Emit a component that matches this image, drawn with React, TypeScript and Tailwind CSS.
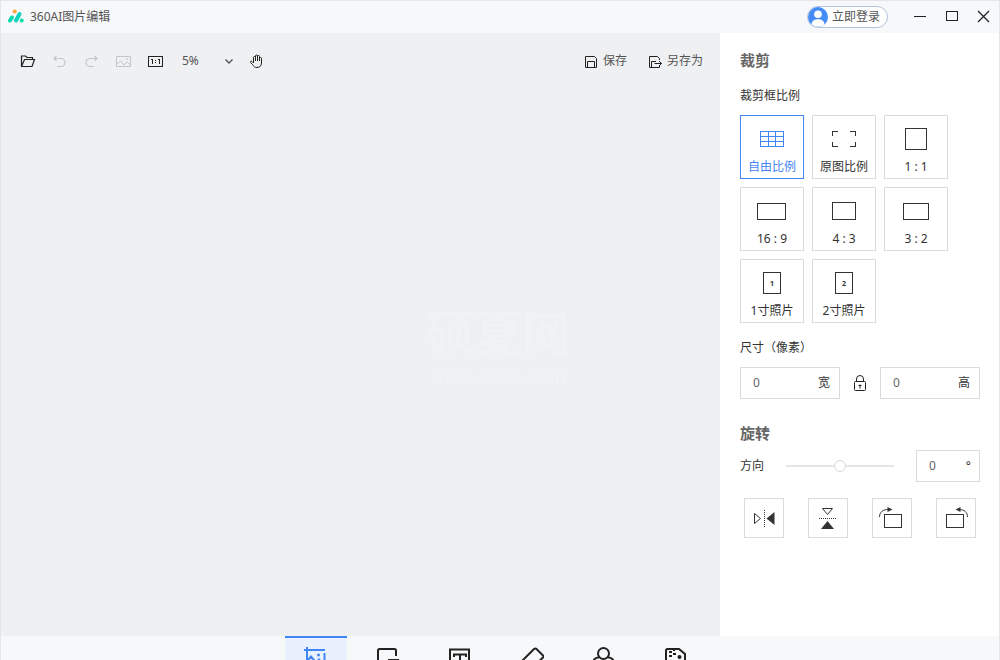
import React, { useState } from "react";

type IconProps = { children: React.ReactNode; w?: number; h?: number; className?: string; crisp?: boolean };

function Icon({ children, w = 16, h = 16, className = "", crisp = false }: IconProps) {
  return (
    <svg
      width={w}
      height={h}
      viewBox={`0 0 ${w} ${h}`}
      fill="none"
      stroke="currentColor"
      shapeRendering={crisp ? "crispEdges" : "auto"}
      className={`shrink-0 ${className}`}
      aria-hidden="true"
    >
      {children}
    </svg>
  );
}

const ratios: { label: string; art: React.ReactNode }[] = [
  {
    label: "自由比例",
    art: <path d="M19.5 15.5h23v15h-23zM19.5 20.5h23M19.5 25.5h23M27.5 15.5v15M34.5 15.5v15" />,
  },
  {
    label: "原图比例",
    art: <path d="M19.5 20V15.5H25M37 15.5h5.5V20M42.5 26v4.5H37M25 30.5h-5.5V26" />,
  },
  { label: "1 : 1", art: <rect x="20.5" y="12.5" width="21" height="21" /> },
  { label: "16 : 9", art: <rect x="16.5" y="15.5" width="28" height="16" /> },
  { label: "4 : 3", art: <rect x="19.5" y="14.5" width="23" height="17" /> },
  { label: "3 : 2", art: <rect x="18.5" y="15.5" width="25" height="16" /> },
  {
    label: "1寸照片",
    art: (
      <>
        <rect x="22.5" y="12.5" width="17" height="21" />
        <text x="31" y="26" textAnchor="middle" fontSize="7" fontWeight="700" fill="currentColor" stroke="none">1</text>
      </>
    ),
  },
  {
    label: "2寸照片",
    art: (
      <>
        <rect x="22.5" y="12.5" width="17" height="21" />
        <text x="31" y="26" textAnchor="middle" fontSize="7" fontWeight="700" fill="currentColor" stroke="none">2</text>
      </>
    ),
  },
];

const tools: { label: string; art: React.ReactNode }[] = [
  {
    label: "裁剪",
    art: (
      <>
        <path d="M3 0v20h21M0 3h21M20.500 6v18M3 14l4-4.500 5 6 3-3 5 6" />
        <circle cx="14.500" cy="8" r="1.500" fill="currentColor" stroke="none" />
      </>
    ),
  },
  {
    label: "尺寸",
    art: <path d="M11 21H2V3.500Q2 2 3.500 2h15Q20 2 20 3.500V9M13 13h9v8h-9z" />,
  },
  {
    label: "文字",
    art: <path d="M2 2.500h19v19H2zM6 10V7.500h12V10M12 7.500V18M9.500 17.500h5" />,
  },
  {
    label: "消除",
    art: <path d="M2 14L14 2Q15.500 1 16.500 2l6.500 6.500Q24 9.500 23 10.500L12 21H8l-6-6" />,
  },
  {
    label: "滤镜",
    art: (
      <>
        <circle cx="11.500" cy="6.500" r="5.500" />
        <path d="M7 10.500a5.500 5.500 0 1 0 5 5.500M16 10.500a5.500 5.500 0 1 1-5 5.500" />
      </>
    ),
  },
  {
    label: "马赛克",
    art: (
      <>
        <path d="M2 22V3.500Q2 2 3.500 2H15l6 5v15z" />
        <path d="M5 4h3v2H5zM9 6h3v2H9zM5 8h3v2H5zM9 2h2v2H9z" fill="currentColor" stroke="none" />
        <circle cx="15.500" cy="10" r="2" fill="currentColor" stroke="none" />
      </>
    ),
  },
];

const transforms: { label: string; art: React.ReactNode }[] = [
  {
    label: "水平翻转",
    art: (
      <>
        <path d="M9.500 14.500l6 5-6 5z" />
        <path d="M19.500 11v17" strokeDasharray="1 1" />
        <path d="M29.500 13v13l-8-6.500z" fill="currentColor" stroke="none" />
      </>
    ),
  },
  {
    label: "垂直翻转",
    art: (
      <>
        <path d="M13.500 9.500h10l-5 6z" />
        <path d="M10 19.500h17" strokeDasharray="1 1" />
        <path d="M12 30h13l-6.500-8z" fill="currentColor" stroke="none" />
      </>
    ),
  },
  {
    label: "向右旋转",
    art: (
      <>
        <rect x="11.500" y="15.500" width="17" height="13" />
        <path d="M6.500 18C6.500 13 10 10.500 15 10.500" />
        <path d="M14.500 8l5 2.500-5 2.500z" fill="currentColor" stroke="none" />
      </>
    ),
  },
  {
    label: "向左旋转",
    art: (
      <>
        <rect x="9.500" y="15.500" width="17" height="13" />
        <path d="M30.500 18C30.500 13 27 10.500 22 10.500" />
        <path d="M23.500 8l-5 2.500 5 2.500z" fill="currentColor" stroke="none" />
      </>
    ),
  },
];

const toolButton = "flex h-6 w-8 items-center justify-center";

function NumberField({ label, unit, className }: { label: string; unit: string; className: string }) {
  return (
    <label className={`flex h-8 items-center border border-[#dadada] bg-white ${className}`}>
      <input aria-label={label} defaultValue="0" className="min-w-0 flex-1 pl-3 text-[#666] outline-none" />
      <span className="text-[#333]">{unit}</span>
    </label>
  );
}

function TitleBar() {
  return (
    <header className="flex h-8 shrink-0 items-center bg-[#f7f8fa] pl-[7px]">
      <Icon className="mr-[6px]">
        <g strokeLinecap="round" strokeWidth="4">
          <path d="M2 11.500L4 8.500" stroke="#08d9b0" />
          <path d="M8 11.500L11.500 5" stroke="#0cd3be" />
          <path d="M13.700 11.600v0" stroke="#08dfa8" />
        </g>
        <circle cx="6.700" cy="2.500" r="2.100" fill="#ffa53a" stroke="none" />
      </Icon>
      <h1 className="flex-1 text-[#555]">360AI图片编辑</h1>
      <button className="mr-[15px] flex h-[22px] items-center gap-1 rounded-full border border-[#b6c3dc] bg-white pr-[7px] text-[#555]">
        <svg width="20" height="20" viewBox="0 0 20 20" aria-hidden="true">
          <circle cx="10" cy="10" r="10" fill="#468cf7" />
          <circle cx="10" cy="7.300" r="3.800" fill="#fff" />
          <path d="M3.500 17.200C4 13.500 7 12.300 10 12.300s6 1.200 6.500 4.900A9.300 9.300 0 0 1 3.500 17.200z" fill="#fff" />
        </svg>
        立即登录
      </button>
      <button aria-label="最小化" className="flex h-8 w-8 items-center justify-center text-[#222]">
        <Icon crisp><path d="M3 7.500h12" /></Icon>
      </button>
      <button aria-label="最大化" className="flex h-8 w-8 items-center justify-center text-[#222]">
        <Icon crisp><rect x="3.500" y="2.500" width="11" height="9" /></Icon>
      </button>
      <button aria-label="关闭" className="flex h-8 w-8 items-center justify-center text-[#222]">
        <Icon><path d="M3 2l11 11M14 2l-11 11" strokeWidth="1.300" /></Icon>
      </button>
    </header>
  );
}

function Toolbar() {
  return (
    <div className="flex items-center pt-4 pr-[17px] pl-[11px] text-[#555]">
      <button aria-label="打开" className={`${toolButton} text-[#222]`}>
        <Icon>
          <path d="M12.500 6.500V4.500H7L5.500 3H1.500V13.500H12l2.500-7H4.500l-3 7" strokeWidth="1.200" />
        </Icon>
      </button>
      <button aria-label="撤销" disabled className={`${toolButton} text-[#c4c5c7]`}>
        <Icon><path d="M4.500 3L2 5.500 4.500 8M2 5.500H9a4 4 0 0 1 0 8H5" strokeWidth="1.200" /></Icon>
      </button>
      <button aria-label="重做" disabled className={`${toolButton} text-[#c4c5c7]`}>
        <Icon><path d="M10.500 3L13 5.500 10.500 8M13 5.500H6a4 4 0 0 0 0 8h4" strokeWidth="1.200" /></Icon>
      </button>
      <button aria-label="原图" disabled className={`${toolButton} text-[#c4c5c7]`}>
        <Icon><path d="M.5 3.500h14v10H.5zM1 11L4.500 8l3.500 4 3-3 3.500 3M10 6h2" /></Icon>
      </button>
      <button aria-label="实际大小" className={`${toolButton} text-[#222]`}>
        <Icon crisp>
          <rect x=".5" y="3.500" width="14" height="10" />
          <path d="M3 6.500h1.500V11M10 6.500h1.500V11" />
          <path d="M7 7h1v1H7zM7 9h1v1H7z" fill="currentColor" stroke="none" />
        </Icon>
      </button>
      <div className="relative">
        <select aria-label="缩放" className="h-6 w-[69px] appearance-none bg-transparent pl-[10px] outline-none">
          <option>5%</option>
          <option>50%</option>
          <option>100%</option>
        </select>
        <Icon className="pointer-events-none absolute top-1 right-1 text-[#555]">
          <path d="M4.500 6.500L8 10l3.500-3.500" strokeWidth="1.400" />
        </Icon>
      </div>
      <button aria-label="移动" className={`${toolButton} text-[#222]`}>
        <Icon>
          <path
            d="M4.500 10V4.500a1 1 0 0 1 2 0V8M6.500 4.500V3a1 1 0 0 1 2 0v5M8.500 3.500a1 1 0 0 1 2 0V8M10.500 5.500a1 1 0 0 1 2 0V10c0 3-2 4.500-4.500 4.500-2.300 0-3.300-1-4.500-3L1.500 9.500c-.5-1 .8-1.800 1.500-1L4.500 10"
            strokeLinejoin="round"
          />
        </Icon>
      </button>
      <button className="ml-auto flex h-6 items-center gap-1">
        <Icon className="text-[#222]">
          <path d="M2.500 3.500h9l2 2v9h-11zM4.500 14.500v-6h7v6" />
        </Icon>
        保存
      </button>
      <button className="ml-5 flex h-6 items-center gap-1">
        <Icon className="text-[#222]">
          <path d="M12.500 12.500v2h-10v-11h8l2 2V7M4.500 14.500v-6H9M7.500 10.500h7M12 8l2.500 2.500L12 13" />
        </Icon>
        另存为
      </button>
    </div>
  );
}

function SidePanel() {
  const [ratio, setRatio] = useState("自由比例");
  return (
    <aside className="w-[279px] shrink-0 bg-white pt-[15px] pr-[19px] pl-5 text-[#333]">
      <h2 className="text-[15px] leading-6 font-semibold text-[#666]">裁剪</h2>
      <h3 className="mt-[14px] leading-5">裁剪框比例</h3>
      <div className="mt-[9px] flex flex-wrap gap-2">
        {ratios.map(({ label, art }) => (
          <button
            key={label}
            aria-pressed={label === ratio}
            onClick={() => setRatio(label)}
            className={`flex h-16 w-16 flex-col items-center border bg-white leading-4 whitespace-nowrap ${
              label === ratio ? "border-[#4286f5] text-[#4286f5]" : "border-[#dadada] text-[#333]"
            }`}
          >
            <Icon w={62} h={43} crisp>{art}</Icon>
            {label}
          </button>
        ))}
      </div>
      <h3 className="mt-[15px] leading-5">尺寸（像素）</h3>
      <div className="mt-[9px] flex items-center justify-between">
        <NumberField label="宽度" unit="宽" className="w-[100px] pr-[9px]" />
        <button aria-label="锁定比例" className="text-[#222]">
          <Icon>
            <rect x="2.500" y="6.500" width="11" height="9" rx="1" />
            <path d="M4.500 6.500V4a3.500 3.500 0 0 1 7 0v2.500M8 9.500v4M6.500 10.500h3" />
          </Icon>
        </button>
        <NumberField label="高度" unit="高" className="w-[100px] pr-[9px]" />
      </div>
      <h2 className="mt-[22px] text-[15px] leading-6 font-semibold text-[#666]">旋转</h2>
      <div className="mt-[5px] flex items-center">
        <label htmlFor="angle">方向</label>
        <input
          id="angle"
          type="range"
          min={-45}
          max={45}
          defaultValue={0}
          className="mx-[22px] h-4 min-w-0 flex-1 appearance-none bg-transparent [&::-webkit-slider-runnable-track]:h-[2px] [&::-webkit-slider-runnable-track]:bg-[#e4e4e4] [&::-webkit-slider-thumb]:-mt-[5px] [&::-webkit-slider-thumb]:h-3 [&::-webkit-slider-thumb]:w-3 [&::-webkit-slider-thumb]:appearance-none [&::-webkit-slider-thumb]:rounded-full [&::-webkit-slider-thumb]:border [&::-webkit-slider-thumb]:border-[#d8d8d8] [&::-webkit-slider-thumb]:bg-white"
        />
        <NumberField label="角度" unit="°" className="w-16 pr-2" />
      </div>
      <div className="mt-4 flex justify-between px-1">
        {transforms.map(({ label, art }) => (
          <button key={label} aria-label={label} className="flex h-10 w-10 border border-[#dadada] text-[#333]">
            <Icon w={38} h={38}>{art}</Icon>
          </button>
        ))}
      </div>
    </aside>
  );
}

export default function App() {
  return (
    <div className="relative flex h-screen flex-col overflow-hidden border-x border-t border-[#e5e6e9] bg-[#eff0f2] font-['Noto_Sans','Noto_Sans_CJK_SC',sans-serif] text-[12px] leading-4">
      <TitleBar />
      <div className="flex min-h-0 flex-1">
        <main className="min-w-0 flex-1">
          <Toolbar />
        </main>
        <SidePanel />
      </div>
      <nav className="flex h-6 shrink-0 justify-center gap-[10px] overflow-hidden bg-[#f7f8fa] pr-2">
        {tools.map(({ label, art }, i) => (
          <button
            key={label}
            aria-label={label}
            className={`flex h-16 w-[62px] items-start justify-center border-t-2 pt-[9px] ${
              i === 0 ? "border-[#4286f5] bg-[#e9f1ff] text-[#4286f5]" : "border-transparent text-[#222]"
            }`}
          >
            <Icon w={24} h={24} className="[stroke-width:2]">{art}</Icon>
          </button>
        ))}
      </nav>
      <div className="pointer-events-none absolute inset-x-0 top-[299px] pr-1 text-center font-bold text-[#f1f2f4]">
        <p className="text-[48px] leading-[66px]">硕夏网</p>
        <p className="text-[17px] leading-6">www.sxiaw.com</p>
      </div>
    </div>
  );
}
